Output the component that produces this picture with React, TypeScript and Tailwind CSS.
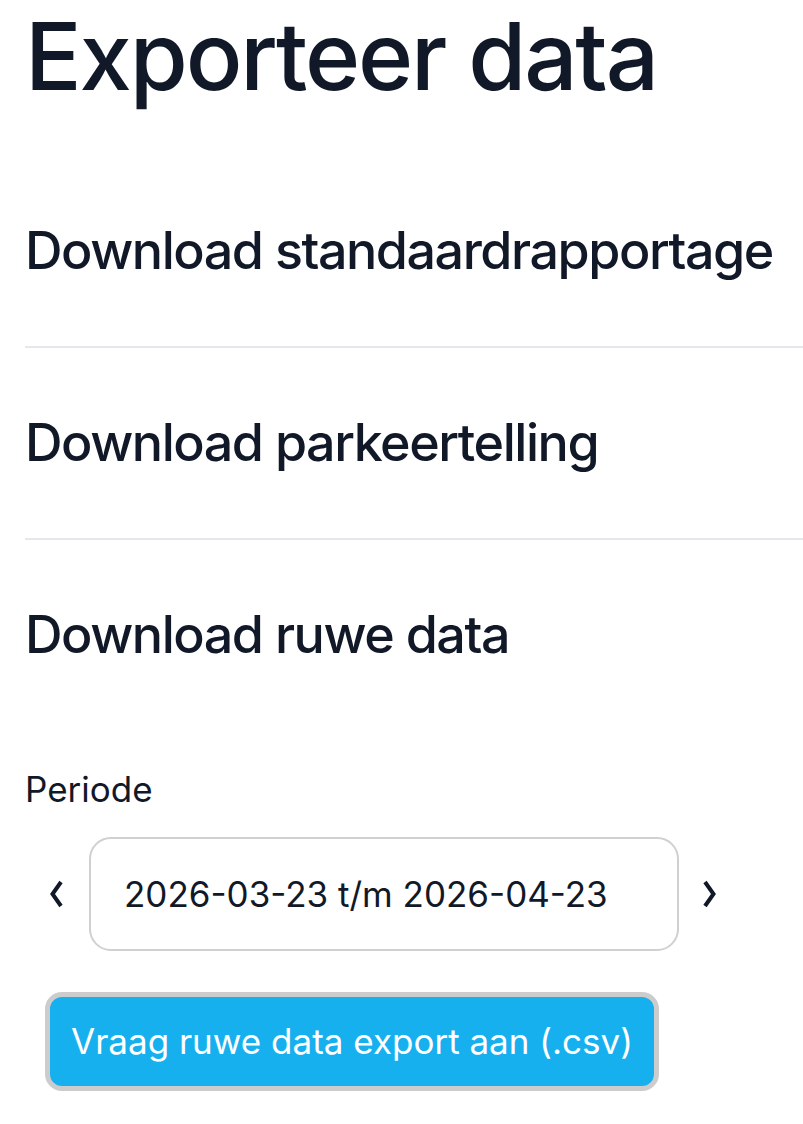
import React from "react";

const font = { fontFamily: "Inter, 'Noto Sans', sans-serif" };

function Chevron({ dir }: { dir: "left" | "right" }) {
  return (
    <svg width="14" height="28" viewBox="0 0 14 28" className="shrink-0 text-[#111827]">
      <path
        d={dir === "left" ? "M12 2 L3.5 14 L12 26" : "M2 2 L10.5 14 L2 26"}
        fill="none"
        stroke="currentColor"
        strokeWidth={4}
        strokeLinecap="butt"
        strokeLinejoin="miter"
      />
    </svg>
  );
}

export default function App() {
  const sections = ["Download standaardrapportage", "Download parkeertelling"];

  return (
    <div className="min-h-[1124px] bg-white pl-[25px] text-[#111827]" style={font}>
      <h1 className="pt-[9px] text-[94px] leading-none font-medium tracking-[-0.023em] whitespace-nowrap">
        Exporteer data
      </h1>

      <div className="mt-[53px]">
        {sections.map((s) => (
          <div key={s} className="border-b-2 border-[#e5e7eb] py-[69px]">
            <h2 className="text-[52px] leading-none font-medium tracking-[-0.028em] whitespace-nowrap">{s}</h2>
          </div>
        ))}
        <div className="pt-[69px]">
          <h2 className="text-[52px] leading-none font-medium tracking-[-0.028em] whitespace-nowrap">
            Download ruwe data
          </h2>
        </div>
      </div>

      <div className="mt-[111px] text-[35px] leading-none">Periode</div>

      <div className="mt-[30px] flex items-center">
        <div className="ml-[24px] mr-[26px]">
          <Chevron dir="left" />
        </div>
        <div className="flex h-[114px] w-[590px] items-center rounded-[22px] border-2 border-[#d0d0d0] pl-[33px] text-[35px]">
          2026-03-23 t/m 2026-04-23
        </div>
        <div className="ml-[24px]">
          <Chevron dir="right" />
        </div>
      </div>

      <button className="mt-[41px] ml-[20px] flex h-[99px] items-center rounded-[17px] border-[5px] border-[#cccccc] bg-[#17b0ef] px-[21px] text-[35px] text-white">
        Vraag ruwe data export aan (.csv)
      </button>
    </div>
  );
}
